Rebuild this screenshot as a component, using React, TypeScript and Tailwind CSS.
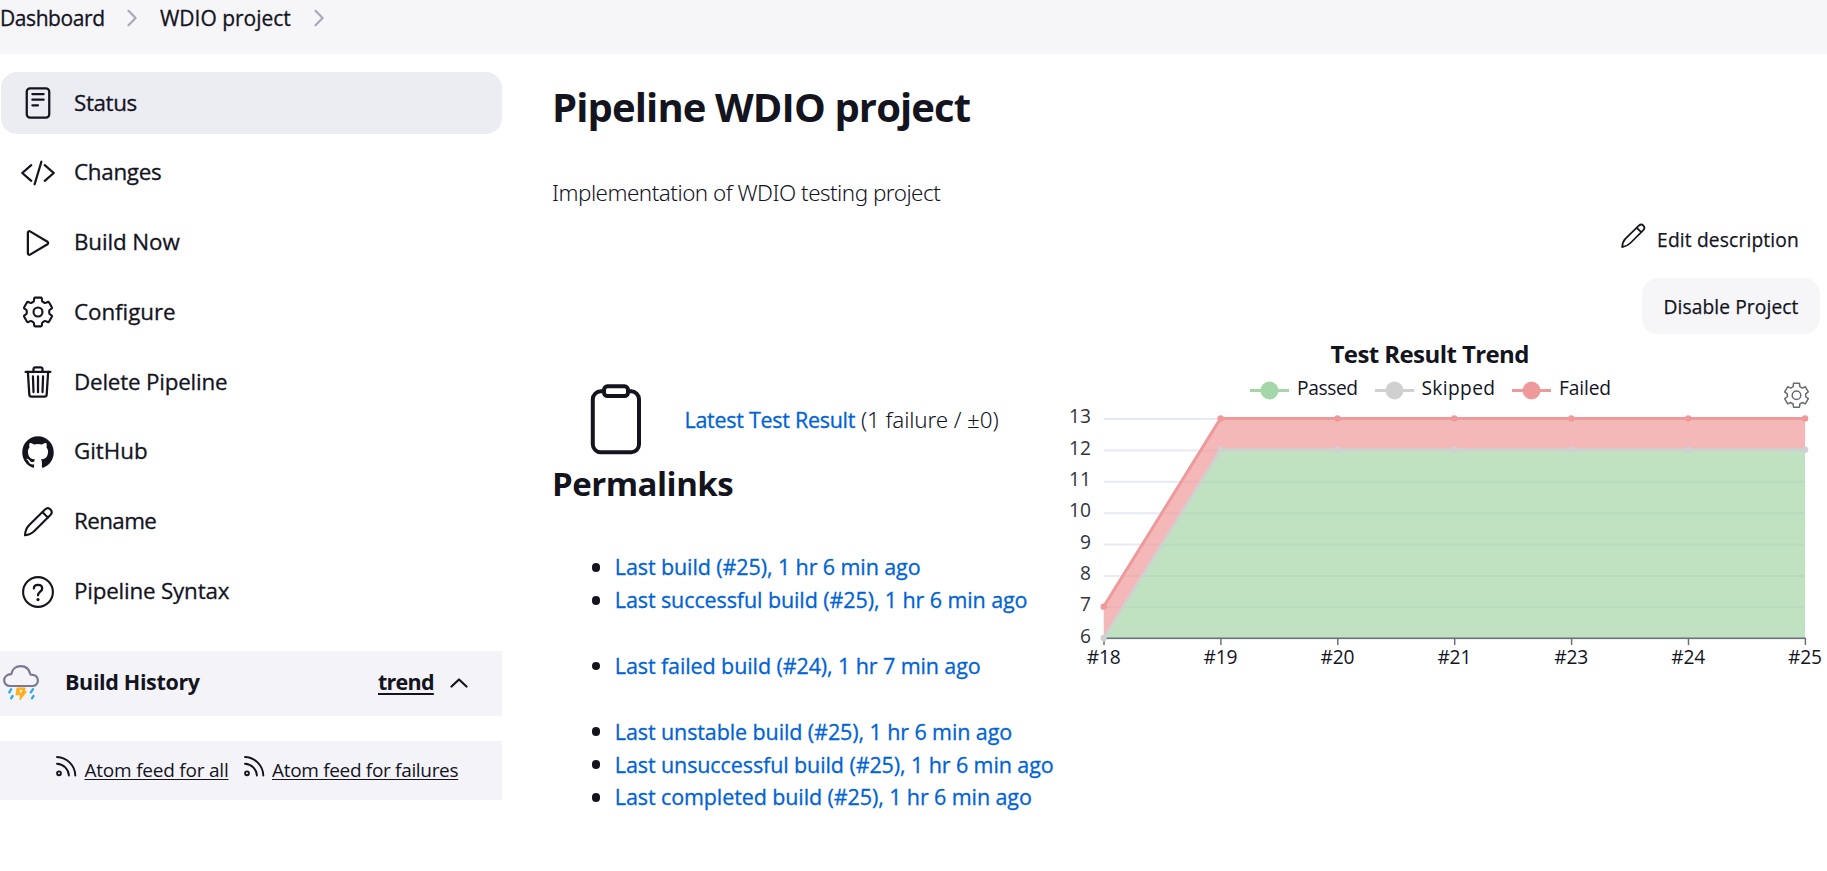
import type { ReactNode } from "react";
import {
  IoCodeSlashOutline,
  IoLogoGithub,
  IoPlayOutline,
  IoReaderOutline,
  IoTrashOutline,
} from "react-icons/io5";

function Pencil({ className }: { className: string }) {
  return (
    <svg viewBox="0 0 36 36" className={className} fill="none" stroke="currentColor" strokeWidth="2.1" strokeLinejoin="round" strokeLinecap="round">
      <path d="M5 31.3C5.200 27.300 6.300 24 9 21.200L25 5.600C26.700 4 29 4 30.500 5.500C32 7 32 9.300 30.400 11L14.600 26.700C12 29.300 9 30.800 5 31.300Z" />
      <path d="M22.600 8.200L27.800 13.400" />
    </svg>
  );
}

function Help({ className }: { className: string }) {
  return (
    <svg viewBox="0 0 36 36" className={className} fill="none" stroke="currentColor" strokeWidth="2.1" strokeLinecap="round">
      <circle cx="18" cy="18" r="14.900" />
      <path d="M13.900 14.400C13.900 12.200 15.700 10.900 18 10.900C20.400 10.900 22.200 12.200 22.200 14.500C22.200 17.600 18 17.700 18 21.300" strokeWidth="2.300" />
      <circle cx="18" cy="25.600" r="1.600" fill="currentColor" stroke="none" />
    </svg>
  );
}

// Closed outline of a six-tooth gear whose corners are rounded by quadratic curves.
function gearPath(c: number) {
  const controls = Array.from({ length: 6 }, (_, k) =>
    [
      [-30, 11.3],
      [-20, 11.3],
      [-15.5, 14.9],
      [-8, 14.5],
      [8, 14.5],
      [15.5, 14.9],
      [20, 11.3],
    ].map(([a, r]) => {
      const t = ((k * 60 + a - 90) * Math.PI) / 180;
      return [c + r * Math.cos(t), c + r * Math.sin(t)];
    }),
  ).flat();
  const mid = (i: number) => {
    const a = controls[i % controls.length];
    const b = controls[(i + 1) % controls.length];
    return `${((a[0] + b[0]) / 2).toFixed(2)} ${((a[1] + b[1]) / 2).toFixed(2)}`;
  };
  return (
    `M${mid(controls.length - 1)}` +
    controls.map((p, i) => `Q${p[0].toFixed(2)} ${p[1].toFixed(2)} ${mid(i)}`).join("") +
    "Z"
  );
}

function Gear({ className }: { className: string }) {
  return (
    <svg viewBox="0 0 36 36" className={className} fill="none" stroke="currentColor" strokeWidth="2.1" strokeLinejoin="round">
      <path d={gearPath(18)} />
      <circle cx="18" cy="18" r="4.500" />
    </svg>
  );
}

function Chevron() {
  return (
    <svg viewBox="0 0 10 18" className="h-[18px] w-[10px]" fill="none" stroke="#a9a8bc" strokeWidth="2.2" strokeLinecap="round" strokeLinejoin="round">
      <path d="M1.500 1.800L8.600 9L1.500 16.200" />
    </svg>
  );
}

function Storm() {
  return (
    <svg viewBox="0 0 40 40" className="h-10 w-10" fill="none" strokeLinecap="round" strokeLinejoin="round">
      <path d="M9.800 23A5.600 5.600 0 0 1 4.200 17.400C4.200 13.800 7 11.400 11.300 11.200C12 6 16 3.200 20.800 3.200C25.800 3.200 29.300 6.400 30.500 11.600C34.600 11.300 37.900 13.700 37.900 17.300C37.900 20.600 35.600 23 32.200 23Z" stroke="#7a7993" strokeWidth="2.2" />
      <path d="M17.200 25.200H25L23.800 28.700H26L20 36.600L20.800 31.700H16.200Z" fill="#ffae1a" stroke="#ffae1a" strokeWidth="1.300" />
      <path d="M20.300 26.500L19.200 29.600H21.500L22.300 27.500Z" fill="#f3f3f8" />
      <path d="M11.200 26.200L9.300 29.400M12.600 33L11.100 35.300M33 26.200L30.800 29.400M33.500 33L31.900 35.300" stroke="#2ba8ea" strokeWidth="2.300" />
    </svg>
  );
}

function Rss() {
  return (
    <svg viewBox="0 0 22 22" className="h-[22px] w-[22px]" fill="none" stroke="currentColor" strokeWidth="1.900" strokeLinecap="round">
      <circle cx="4" cy="18.300" r="1.900" />
      <path d="M2 8.800C8.500 9.200 13.600 14.200 13.900 20.500" />
      <path d="M2 2C12 2.400 20 10.400 20.300 20.500" />
    </svg>
  );
}

const icon = "h-9 w-9 shrink-0";

const tasks: { label: string; icon: ReactNode; tracking: string; active?: boolean }[] = [
  { label: "Status", icon: <IoReaderOutline className={icon} />, tracking: "tracking-[-0.38px]", active: true },
  { label: "Changes", icon: <IoCodeSlashOutline className={icon} />, tracking: "tracking-[-0.29px]" },
  { label: "Build Now", icon: <IoPlayOutline className={icon} />, tracking: "tracking-[-0.12px]" },
  { label: "Configure", icon: <Gear className={icon} />, tracking: "tracking-[-0.07px]" },
  { label: "Delete Pipeline", icon: <IoTrashOutline className={icon} />, tracking: "tracking-[-0.2px]" },
  { label: "GitHub", icon: <IoLogoGithub className={icon} />, tracking: "tracking-[-0.03px]" },
  { label: "Rename", icon: <Pencil className={icon} />, tracking: "tracking-[-0.6px]" },
  { label: "Pipeline Syntax", icon: <Help className={icon} />, tracking: "tracking-[-0.2px]" },
];

const permalinks = [
  ["Last build (#25), 1 hr 6 min ago", "Last successful build (#25), 1 hr 6 min ago"],
  ["Last failed build (#24), 1 hr 7 min ago"],
  [
    "Last unstable build (#25), 1 hr 6 min ago",
    "Last unsuccessful build (#25), 1 hr 6 min ago",
    "Last completed build (#25), 1 hr 6 min ago",
  ],
];

const builds = ["#18", "#19", "#20", "#21", "#23", "#24", "#25"];
const passed = [6, 12, 12, 12, 12, 12, 12];
const total = [7, 13, 13, 13, 13, 13, 13];
const levels = [13, 12, 11, 10, 9, 8, 7, 6];
const legend = [
  { label: "Passed", color: "#a5d6a7", x: 1250, text: 1297, width: 61 },
  { label: "Skipped", color: "#d0d0d0", x: 1375, text: 1421.5, width: 73.5 },
  { label: "Failed", color: "#ef9a9a", x: 1512, text: 1559, width: 52 },
];

const px = (i: number) => 1103.7 + i * 116.9;
const py = (v: number) => 638 - (v - 6) * 31.37;
const points = (values: number[]) => values.map((v, i) => `${px(i).toFixed(1)},${py(v).toFixed(1)}`).join(" ");

const cog = Array.from({ length: 6 }, (_, k) =>
  [
    [-21, 9.3],
    [-14, 12.3],
    [14, 12.3],
    [21, 9.3],
  ].map(([a, r]) => {
    const t = ((k * 60 + a - 90) * Math.PI) / 180;
    return `${(1796.5 + r * Math.cos(t)).toFixed(2)},${(395.3 + r * Math.sin(t)).toFixed(2)}`;
  }).join(" "),
).join(" ");

function TrendChart() {
  const base = `${px(6)},${py(6)} ${px(0)},${py(6)}`;
  return (
    <svg viewBox="1060 334 767 346" className="h-[346px] w-[767px] shrink-0 text-[19.2px]" fill="#14141f">
      <text x="1330.500" y="363" textLength="199" className="text-[24px] font-bold">Test Result Trend</text>
      {legend.map((l) => (
        <g key={l.label}>
          <path d={`M${l.x} 390.500h39`} stroke={l.color} strokeWidth="3" />
          <circle cx={l.x + 19.5} cy="390.500" r="9" fill={l.color} />
          <text x={l.text} y="395" textLength={l.width}>{l.label}</text>
        </g>
      ))}
      <g fill="none" stroke="#6a6a6e" strokeWidth="1.500" strokeLinejoin="round">
        <polygon points={cog} />
        <circle cx="1796.500" cy="395.300" r="4.300" />
      </g>
      {levels.map((v) => (
        <g key={v}>
          <path d={`M1103.700 ${py(v) + 0.7}H1805`} stroke="#e6eaf5" strokeWidth="2" />
          <text x="1091" y={py(v) + 4.8} textAnchor="end" fill="#33333d">{v}</text>
        </g>
      ))}
      <polygon points={`${points(passed)} ${base}`} fill="#a5d6a7" fillOpacity="0.7" />
      <polygon
        points={`${points(total)} ${points(passed).split(" ").reverse().join(" ")}`}
        fill="#ef9a9a"
        fillOpacity="0.7"
      />
      <path d="M1103.700 638.300H1805.500" stroke="#6e7079" strokeWidth="1.500" />
      {builds.map((b, i) => (
        <g key={b}>
          <path d={`M${px(i) + 0.3} 638v7`} stroke="#6e7079" strokeWidth="1.500" />
          <text x={px(i)} y="663.500" textAnchor="middle" textLength="34">{b}</text>
        </g>
      ))}
      <polyline points={points(passed)} fill="none" stroke="#d0d0d0" strokeWidth="3" strokeLinejoin="bevel" />
      <polyline points={points(total)} fill="none" stroke="#ef9a9a" strokeWidth="3" strokeLinejoin="bevel" />
      {builds.map((b, i) => (
        <g key={b}>
          <circle cx={px(i)} cy={py(passed[i])} r="3.200" fill="#d0d0d0" />
          <circle cx={px(i)} cy={py(total[i])} r="3.200" fill="#ef9a9a" />
        </g>
      ))}
    </svg>
  );
}

export default function App() {
  return (
    <div className="h-[871px] w-[1827px] overflow-hidden bg-white font-['Open_Sans','Noto_Sans',sans-serif] text-[#14141f]">
      <nav className="flex h-[54px] items-start bg-[#f6f6f9] pt-[2px] text-[21px] leading-[32px] [-webkit-text-stroke:0.3px]">
        <div className="flex items-center">
          <span className="w-[127px] tracking-[-0.42px]">Dashboard</span>
          <Chevron />
          <span className="ml-[23px] w-[154px] tracking-[-0.02px]">WDIO project</span>
          <Chevron />
        </div>
      </nav>

      <div className="flex">
        <aside className="w-[502px] shrink-0 pt-[18px]">
          <ul className="flex flex-col gap-[7.8px] pl-px">
            {tasks.map((t) => (
              <li
                key={t.label}
                className={`flex h-[62px] items-center gap-[18px] rounded-2xl pl-[19px] ${t.active ? "bg-[#ecedf3]" : ""}`}
              >
                {t.icon}
                <span className={`pb-px text-[22.4px] leading-[32px] [-webkit-text-stroke:0.3px] ${t.tracking}`}>{t.label}</span>
              </li>
            ))}
          </ul>

          <div className="mt-[28px] flex h-[65px] items-center bg-[#f3f3f8] text-[21.5px] font-bold leading-[32px]">
            <Storm />
            <span className="ml-[25px] w-[313px] pb-[3px] tracking-[-0.35px]">Build History</span>
            <span className="pb-[3px] tracking-[-0.75px] underline decoration-2 underline-offset-[3px]">trend</span>
            <svg viewBox="0 0 18 10" className="ml-[16px] h-[10px] w-[18px]" fill="none" stroke="currentColor" strokeWidth="2.200" strokeLinecap="round" strokeLinejoin="round">
              <path d="M1.500 8.500L9 1.500L16.500 8.500" />
            </svg>
          </div>

          <div className="mt-[25px] flex h-[59px] items-center bg-[#f3f3f8] pl-[55px] text-[19px] leading-[30px]">
            <span className="pb-[8px]"><Rss /></span>
            <span className="ml-[7.500px] w-[158px]">
              <span className="tracking-[-0.22px] underline decoration-1 underline-offset-[2px]">Atom feed for all</span>
            </span>
            <span className="pb-[8px]"><Rss /></span>
            <span className="ml-[7.500px] tracking-[-0.32px] underline decoration-1 underline-offset-[2px]">Atom feed for failures</span>
          </div>
        </aside>

        <main className="min-w-0 flex-1 pl-[51px] pt-[29px]">
          <h1 className="-ml-px text-[40px] font-bold leading-[48px] tracking-[-0.88px]">Pipeline WDIO project</h1>
          <p className="-ml-px mt-[46px] font-['Noto_Sans'] text-[22.4px] font-light leading-[32px] tracking-[-0.5px]">
            Implementation of WDIO testing project
          </p>

          <div className="flex flex-col items-end pr-[7px]">
            <div className="mt-[15px] flex h-[32px] items-center pr-[21px] text-[19.2px] tracking-[0.16px] [-webkit-text-stroke:0.25px]">
              <span className="pb-[9px]"><Pencil className="h-[30px] w-[30px]" /></span>
              <span className="ml-[9px]">Edit description</span>
            </div>
            <button className="mt-[22px] h-[56px] w-[178px] rounded-2xl bg-[#f6f6f9] pt-[2px] text-[19.2px] tracking-[0.1px] [-webkit-text-stroke:0.25px]">
              Disable Project
            </button>
          </div>

          <div className="flex">
            <section className="w-[507px] shrink-0">
              <div className="mt-[50px] flex h-[71px] items-center pl-[37px] leading-[32px]">
                <svg viewBox="0 0 51 71" className="h-[71px] w-[51px]" fill="none" stroke="currentColor" strokeWidth="4">
                  <path d="M14 7.300H11A8 8 0 0 0 2.800 15.300V60.500A8 8 0 0 0 11 68.300H41.500A8 8 0 0 0 49 60.500V15.300A8 8 0 0 0 41.500 7.300H38" />
                  <rect x="14" y="2.300" width="24" height="9.800" rx="3.500" />
                </svg>
                <span className="ml-[43.500px] w-[176.500px] text-[21.5px] tracking-[-0.28px] text-[#0063d6] [-webkit-text-stroke:0.3px]">Latest Test Result</span>
                <span className="whitespace-nowrap font-['Noto_Sans'] text-[22.4px] font-light tracking-[-0.12px]">(1 failure / ±0)</span>
              </div>
              <h2 className="-ml-px mt-[7px] text-[33px] font-bold leading-[44px] tracking-[-0.5px]">Permalinks</h2>
              <div className="mt-[45px] flex flex-col gap-[32.800px]">
                {permalinks.map((group) => (
                  <ul key={group[0]}>
                    {group.map((text) => (
                      <li key={text} className="flex h-[32.900px] items-center whitespace-nowrap pl-[38.500px]">
                        <span className="mr-[14.800px] size-[8.500px] shrink-0 rounded-full bg-[#14141f]" />
                        <span className="text-[21.500px] leading-[32px] tracking-[-0.1px] text-[#0063d6] [-webkit-text-stroke:0.3px]">{text}</span>
                      </li>
                    ))}
                  </ul>
                ))}
              </div>
            </section>
            <TrendChart />
          </div>
        </main>
      </div>
    </div>
  );
}
